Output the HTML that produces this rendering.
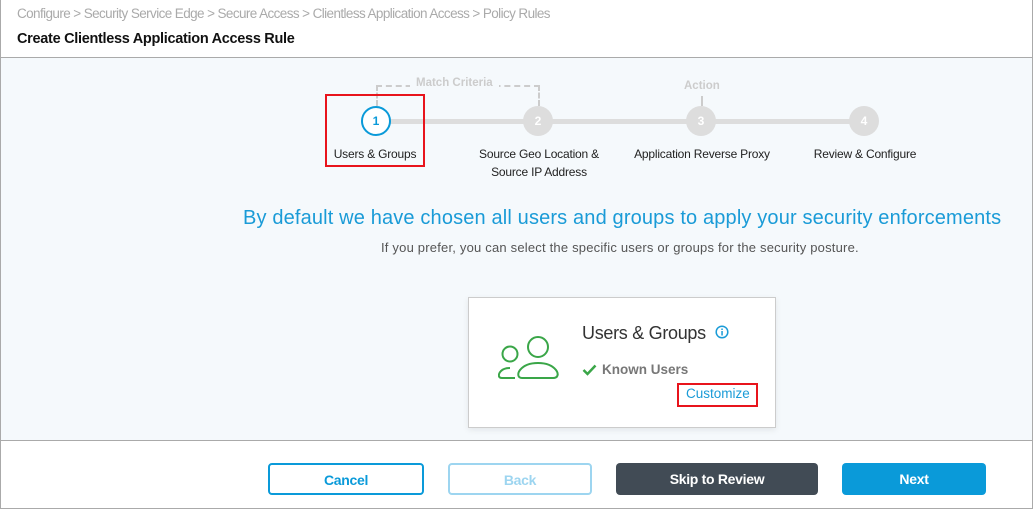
<!DOCTYPE html>
<html><head><style>
*{margin:0;padding:0;box-sizing:border-box}
body{width:1034px;height:510px;background:#fff;font-family:"Liberation Sans",sans-serif;position:relative;overflow:hidden}
.a{position:absolute;white-space:nowrap}
.frame{position:absolute;left:0;top:0;width:1033px;height:509px;border:1px solid #aaa;border-top:none}
.c{position:absolute;width:30px;height:30px;border-radius:50%;background:#ddd;color:#fff;font-size:12px;font-weight:bold;text-align:center;line-height:30px}
.lbl{position:absolute;font-size:12px;color:#222;text-align:center;line-height:18px;letter-spacing:-0.2px}
.btn{position:absolute;top:463px;height:32px;border-radius:4px;font-size:14px;font-weight:bold;text-align:center;line-height:30px;letter-spacing:-0.3px}
</style></head><body>
<div class="frame"></div>
<div class="a" style="left:17px;top:6px;font-size:13.5px;color:#aaa;letter-spacing:-0.6px">Configure &gt; Security Service Edge &gt; Secure Access &gt; Clientless Application Access &gt; Policy Rules</div>
<div class="a" style="left:17px;top:31px;font-size:14.5px;font-weight:bold;color:#111;letter-spacing:-0.3px">Create Clientless Application Access Rule</div>
<div class="a" style="left:1px;top:57px;width:1031px;height:1px;background:#aaa"></div>
<div class="a" style="left:1px;top:58px;width:1031px;height:382px;background:#f5f9fc"></div>
<div class="a" style="left:1px;top:440px;width:1031px;height:1px;background:#aaa"></div>
<!-- stepper -->
<div class="a" style="left:376px;top:85px;width:164px;height:21px;border-top:2px dashed #ccc;border-left:2px dashed #ccc;border-right:2px dashed #ccc"></div>
<div class="a" style="left:410px;top:77px;background:#f5f9fc;padding:0 6px;font-size:11.5px;font-weight:bold;color:#ccc">Match Criteria</div>
<div class="a" style="left:684px;top:80px;font-size:11.5px;font-weight:bold;color:#ccc">Action</div>
<div class="a" style="left:701px;top:96px;height:10px;border-left:2px dashed #ccc"></div>
<div class="a" style="left:376px;top:119px;width:490px;height:5px;background:#ddd"></div>
<div class="c" style="left:361px;top:106px;background:#fff;border:2px solid #0a9ad9;color:#0a9ad9;line-height:26px">1</div>
<div class="c" style="left:523px;top:106px">2</div>
<div class="c" style="left:686px;top:106px">3</div>
<div class="c" style="left:849px;top:106px">4</div>
<div class="a" style="left:325px;top:94px;width:100px;height:73px;border:2px solid #e8141c"></div>
<div class="lbl" style="left:326px;top:145px;width:98px">Users &amp; Groups</div>
<div class="lbl" style="left:463px;top:145px;width:152px">Source Geo Location &amp;<br>Source IP Address</div>
<div class="lbl" style="left:622px;top:145px;width:160px">Application Reverse Proxy</div>
<div class="lbl" style="left:800px;top:145px;width:130px">Review &amp; Configure</div>
<div class="a" style="left:243px;top:207px;font-size:20px;color:#1a9bd7;letter-spacing:0.15px">By default we have chosen all users and groups to apply your security enforcements</div>
<div class="a" style="left:381px;top:240px;font-size:13px;color:#555;letter-spacing:0.2px">If you prefer, you can select the specific users or groups for the security posture.</div>
<!-- card -->
<div class="a" style="left:468px;top:297px;width:308px;height:131px;background:#fff;border:1px solid #ccc;box-shadow:0 2px 6px rgba(0,0,0,.08)"></div>
<svg class="a" style="left:498px;top:334px" width="64" height="48" viewBox="0 0 64 48">
<g fill="none" stroke="#3aa648" stroke-width="2">
<circle cx="12" cy="20" r="7.5"/><circle cx="40" cy="13" r="10"/>
<path d="M17 44 H4 C0 44 0 40 3 37 C5 35 8 34 12 34"/>
<path d="M24 44 H55 C60 44 61 40 58 36 C54 31 47 29 40 29 C33 29 26 31 22 36 C19 40 20 44 24 44Z"/>
</g></svg>
<div class="a" style="left:582px;top:323px;font-size:18px;color:#333;letter-spacing:-0.3px">Users &amp; Groups</div>
<svg class="a" style="left:715px;top:325px" width="14" height="14"><circle cx="7" cy="7" r="5.8" fill="none" stroke="#1a9bd7" stroke-width="1.5"/><rect x="6.3" y="6" width="1.5" height="4.5" fill="#1a9bd7"/><rect x="6.3" y="3.5" width="1.5" height="1.5" fill="#1a9bd7"/></svg>
<svg class="a" style="left:582px;top:364px" width="15" height="12"><path d="M1.5 6 L5.5 10 L13.5 1.5" fill="none" stroke="#3aa648" stroke-width="2.5"/></svg>
<div class="a" style="left:602px;top:362px;font-size:13.5px;font-weight:bold;color:#777">Known Users</div>
<div class="a" style="left:677px;top:383px;width:81px;height:24px;border:2px solid #e8141c"></div>
<div class="a" style="left:686px;top:386px;font-size:13.5px;color:#1a9bd7">Customize</div>
<!-- buttons -->
<div class="btn" style="left:268px;width:156px;border:2px solid #0a9ad9;color:#0a9ad9">Cancel</div>
<div class="btn" style="left:448px;width:144px;border:2px solid #9dd5f0;color:#9dd5f0">Back</div>
<div class="btn" style="left:616px;width:202px;background:#414b55;color:#fff;line-height:32px">Skip to Review</div>
<div class="btn" style="left:842px;width:144px;background:#0a9ad9;color:#fff;line-height:32px">Next</div>
</body></html>
